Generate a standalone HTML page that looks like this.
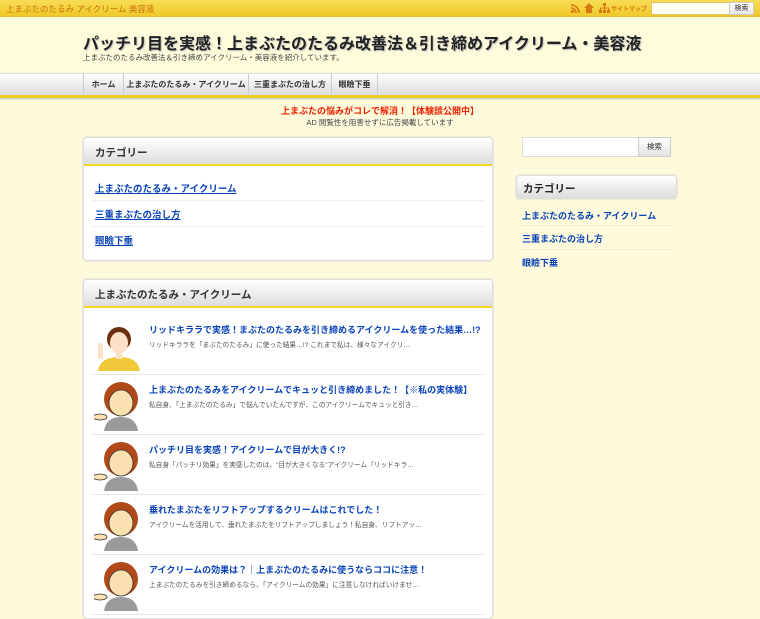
<!DOCTYPE html>
<html><head><meta charset="utf-8"><style>
*{margin:0;padding:0;box-sizing:border-box}
body{width:760px;height:600px;overflow:hidden;background:#fefbdc;font-family:"Liberation Sans","Noto Sans CJK JP",sans-serif;position:relative}
.abs{position:absolute}
#top{left:0;top:0;width:760px;height:17px;background:linear-gradient(#f7dc55,#efc92a);border-bottom:1px solid #e4c040}
#top .t{left:6px;top:3px;font-size:8.5px;color:#c8700a}
#hd{left:0;top:17px;width:760px;height:56px;background:#fffcdb}
h1{position:absolute;left:83px;top:30px;font-size:16px;font-weight:bold;color:#222;white-space:nowrap;text-shadow:1px 1px 1px #bbb}
.sub{left:83px;top:52px;font-size:7.5px;color:#444;white-space:nowrap}
#nav{left:0;top:73px;width:760px;height:25px;background:linear-gradient(#fff,#ddd);border-top:1px solid #ddd;border-bottom:3px solid #f0cc20;box-shadow:0 1px 2px #bbb}
#nav div{position:absolute;top:0;height:22px;line-height:22px;font-size:8px;font-weight:bold;color:#333;text-align:center;border-left:1px solid #ccc;white-space:nowrap}
.box{position:absolute;background:#fff;border:1px solid #ddd;border-radius:4px;box-shadow:0 0 2px #ccc}
.bh{height:28px;background:linear-gradient(#fff,#ddd);border-bottom:2px solid #f5d520;border-radius:4px 4px 0 0;font-size:10.5px;font-weight:bold;color:#333;padding:7px 11px}
a{color:#0a43b8;font-weight:bold;text-decoration:underline;font-size:9.5px}
.ln{position:absolute;left:11px;font-size:9.5px}
.sep{position:absolute;height:1px;background:#eee}
.it{position:absolute;left:8px;width:392px;height:60px;border-bottom:1px solid #e5e5e5}
.it .ti{position:absolute;left:57px;top:8px;font-size:9px;font-weight:bold;color:#0a43b8;white-space:nowrap}
.it .de{position:absolute;left:57px;top:24px;font-size:6.7px;color:#555;white-space:nowrap}
.it svg{position:absolute;left:2px;top:4px}
.sl{position:absolute;left:522px;font-size:9px;font-weight:bold;color:#0a43b8}
</style></head><body>
<div id="top" class="abs"><div class="t abs">上まぶたのたるみ アイクリーム 美容液</div>
<svg class="abs" style="left:571px;top:4px" width="9" height="9"><circle cx="1.5" cy="7.5" r="1.5" fill="#d87810"/><path d="M0 4a5 5 0 0 1 5 5M0 1a8 8 0 0 1 8 8" stroke="#d87810" stroke-width="1.6" fill="none"/></svg>
<svg class="abs" style="left:584px;top:3px" width="10" height="10"><path d="M5 0L0 5h2v5h6V5h2z" fill="#d87810"/></svg>
<svg class="abs" style="left:599px;top:3px" width="11" height="10"><rect x="4" y="0" width="3" height="3" fill="#d87810"/><rect x="0" y="7" width="3" height="3" fill="#d87810"/><rect x="4" y="7" width="3" height="3" fill="#d87810"/><rect x="8" y="7" width="3" height="3" fill="#d87810"/><path d="M5.5 3v4M1.5 7V5h8v2" stroke="#d87810" fill="none"/></svg>
<div class="abs" style="left:611px;top:4px;font-size:6px;color:#d87810;font-weight:bold;white-space:nowrap">サイトマップ</div>
<div class="abs" style="left:651px;top:2px;width:79px;height:13px;background:#fffef2;border:1px solid #e0c060"></div>
<div class="abs" style="left:729px;top:2px;width:25px;height:13px;background:linear-gradient(#fff,#e8e8e8);border:1px solid #ccc;font-size:7px;text-align:center;line-height:11px;color:#333">検索</div>
</div>
<div id="hd" class="abs"></div>
<h1>パッチリ目を実感！上まぶたのたるみ改善法＆引き締めアイクリーム・美容液</h1>
<div class="sub abs">上まぶたのたるみ改善法＆引き締めアイクリーム・美容液を紹介しています。</div>
<div id="nav" class="abs">
<div style="left:83px;width:40px">ホーム</div>
<div style="left:123px;width:125px">上まぶたのたるみ・アイクリーム</div>
<div style="left:248px;width:83px">三重まぶたの治し方</div>
<div style="left:331px;width:47px;border-right:1px solid #ccc">眼瞼下垂</div>
</div>
<div class="abs" style="left:0;width:760px;top:104px;text-align:center;font-size:9px;font-weight:bold;color:#ee2200">上まぶたの悩みがコレで解消！【体験談公開中】</div>
<div class="abs" style="left:0;width:760px;top:117px;text-align:center;font-size:7.5px;color:#444">AD 閲覧性を阻害せずに広告掲載しています</div>

<div class="box" style="left:83px;top:137px;width:410px;height:124px">
<div class="bh">カテゴリー</div>
<a class="ln" style="top:43px">上まぶたのたるみ・アイクリーム</a>
<div class="sep" style="left:8px;width:392px;top:62px"></div>
<a class="ln" style="top:69px">三重まぶたの治し方</a>
<div class="sep" style="left:8px;width:392px;top:88px"></div>
<a class="ln" style="top:95px">眼瞼下垂</a>
</div>

<div class="box" style="left:83px;top:279px;width:410px;height:340px">
<div class="bh">上まぶたのたるみ・アイクリーム</div>
<div class="it" style="top:35px">
<svg width="50" height="52"><path d="M4 52q2-14 21-14t21 14z" fill="#f0c838"/><circle cx="25" cy="20" r="12" fill="#6b3010"/><ellipse cx="25" cy="24" rx="9" ry="11" fill="#fde0c8"/><rect x="22" y="33" width="6" height="7" fill="#fde0c8"/><rect x="4" y="24" width="5" height="16" rx="2" fill="#fde0c8"/></svg>
<div class="ti">リッドキララで実感！まぶたのたるみを引き締めるアイクリームを使った結果…!?</div>
<div class="de">リッドキララを「まぶたのたるみ」に使った結果…!? これまで私は、様々なアイクリ…</div></div>
<div class="it" style="top:95px">
<svg width="50" height="52"><path d="M10 52q2-14 17-14t17 14z" fill="#9a9a9a"/><circle cx="27" cy="20" r="17" fill="#b04818"/><ellipse cx="27" cy="24" rx="12" ry="13" fill="#fbe0b0" stroke="#333" stroke-width=".8"/><ellipse cx="6" cy="38" rx="7" ry="3" fill="#fbe0b0" stroke="#333" stroke-width=".8"/></svg>
<div class="ti">上まぶたのたるみをアイクリームでキュッと引き締めました！【※私の実体験】</div>
<div class="de">私自身、「上まぶたのたるみ」で悩んでいたんですが、このアイクリームでキュッと引き…</div></div>
<div class="it" style="top:155px">
<svg width="50" height="52"><path d="M10 52q2-14 17-14t17 14z" fill="#9a9a9a"/><circle cx="27" cy="20" r="17" fill="#b04818"/><ellipse cx="27" cy="24" rx="12" ry="13" fill="#fbe0b0" stroke="#333" stroke-width=".8"/><ellipse cx="6" cy="38" rx="7" ry="3" fill="#fbe0b0" stroke="#333" stroke-width=".8"/></svg>
<div class="ti">パッチリ目を実感！アイクリームで目が大きく!?</div>
<div class="de">私自身「パッチリ効果」を実感したのは、"目が大きくなる"アイクリーム『リッドキラ…</div></div>
<div class="it" style="top:215px">
<svg width="50" height="52"><path d="M10 52q2-14 17-14t17 14z" fill="#9a9a9a"/><circle cx="27" cy="20" r="17" fill="#b04818"/><ellipse cx="27" cy="24" rx="12" ry="13" fill="#fbe0b0" stroke="#333" stroke-width=".8"/><ellipse cx="6" cy="38" rx="7" ry="3" fill="#fbe0b0" stroke="#333" stroke-width=".8"/></svg>
<div class="ti">垂れたまぶたをリフトアップするクリームはこれでした！</div>
<div class="de">アイクリームを活用して、垂れたまぶたをリフトアップしましょう！私自身、リフトアッ…</div></div>
<div class="it" style="top:275px">
<svg width="50" height="52"><path d="M10 52q2-14 17-14t17 14z" fill="#9a9a9a"/><circle cx="27" cy="20" r="17" fill="#b04818"/><ellipse cx="27" cy="24" rx="12" ry="13" fill="#fbe0b0" stroke="#333" stroke-width=".8"/><ellipse cx="6" cy="38" rx="7" ry="3" fill="#fbe0b0" stroke="#333" stroke-width=".8"/></svg>
<div class="ti">アイクリームの効果は？｜上まぶたのたるみに使うならココに注意！</div>
<div class="de">上まぶたのたるみを引き締めるなら、「アイクリームの効果」に注意しなければいけませ…</div></div>
</div>

<div class="abs" style="left:522px;top:137px;width:117px;height:20px;background:#fff;border:1px solid #ddd"></div>
<div class="abs" style="left:638px;top:137px;width:33px;height:20px;background:linear-gradient(#fff,#e4e4e4);border:1px solid #ccc;font-size:7.5px;text-align:center;line-height:18px;color:#333">検索</div>
<div class="box" style="left:516px;top:175px;width:161px;height:24px;background:linear-gradient(#fff,#ddd);font-size:10.5px;font-weight:bold;color:#222;padding:5px 6px;border-radius:4px">カテゴリー</div>
<div class="sl" style="top:209px">上まぶたのたるみ・アイクリーム</div>
<div class="sep" style="left:519px;width:155px;top:225px;background:#f0ecc8"></div>
<div class="sl" style="top:232px">三重まぶたの治し方</div>
<div class="sep" style="left:519px;width:155px;top:249px;background:#f0ecc8"></div>
<div class="sl" style="top:256px">眼瞼下垂</div>
</body></html>
